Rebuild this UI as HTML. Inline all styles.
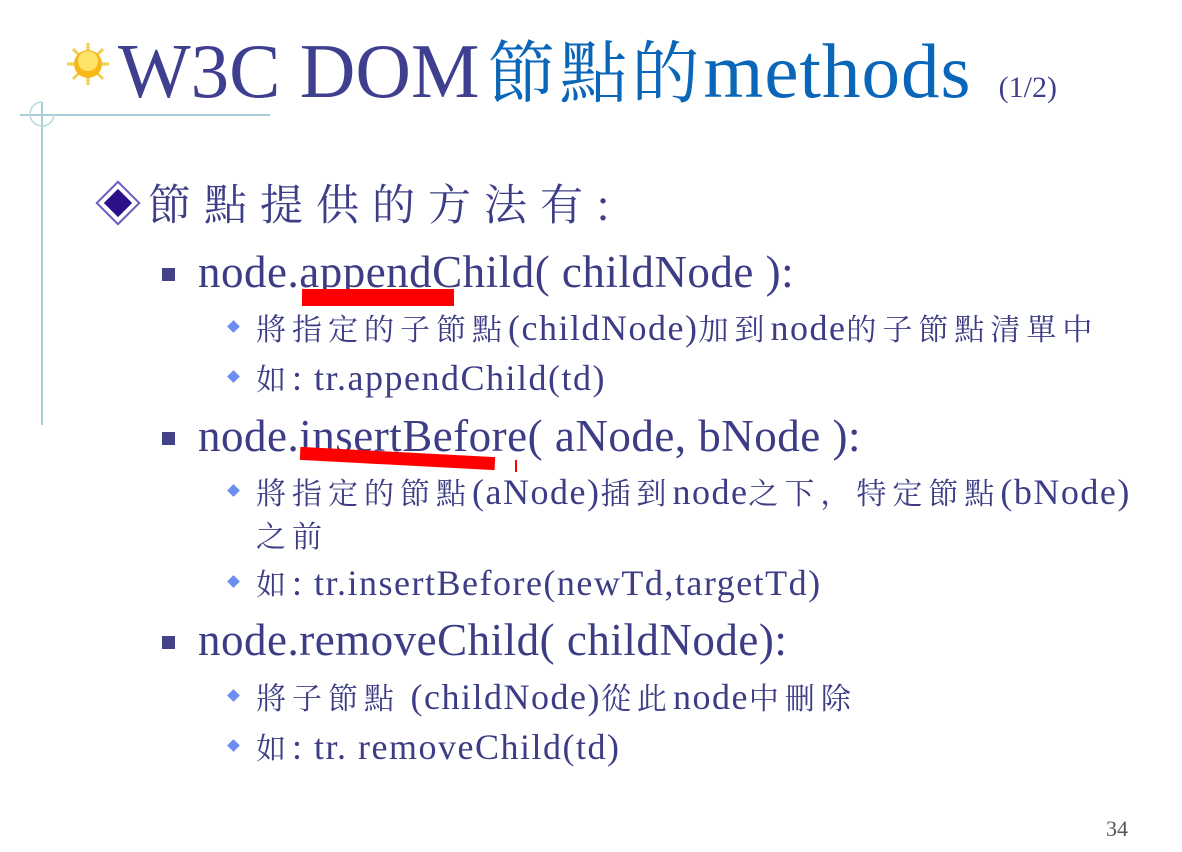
<!DOCTYPE html>
<html><head><meta charset="utf-8"><style>
body{margin:0;width:1182px;height:852px;background:#fff;overflow:hidden;position:relative;font-family:"Liberation Serif","Noto Serif CJK TC","Noto Serif CJK SC",serif;color:#3d3d86}
.a{position:absolute;white-space:nowrap;line-height:1}
.cj{font-family:"Noto Serif CJK SC","Noto Serif CJK TC",serif;}
.l2{font-size:45px;left:198px;letter-spacing:0.5px}
.l3{font-size:36px;left:256px;letter-spacing:1.5px}
.l3 .cj{font-size:30px;letter-spacing:6px}
.sq{position:absolute;width:13px;height:13px;background:#43438a;left:162px}
.dm{position:absolute;width:9px;height:9px;background:#6d8df0;transform:rotate(45deg);left:229px}
.red{position:absolute;background:#f00}
</style></head><body>
<svg style="position:absolute;left:0;top:0" width="300" height="440">
<line x1="20" y1="115" x2="270" y2="115" stroke="#a8cfd8" stroke-width="2"/>
<line x1="42" y1="102" x2="42" y2="425" stroke="#a8cfd8" stroke-width="2"/>
<path d="M42 102 A12 12 0 1 0 54 115" fill="none" stroke="#b8d8e0" stroke-width="1.5"/>
<g transform="translate(88,64)">
<g stroke="#f3d04a" stroke-width="3">
<line x1="0" y1="-21" x2="0" y2="21"/><line x1="-21" y1="0" x2="21" y2="0"/>
<line x1="-15" y1="-15" x2="15" y2="15"/><line x1="-15" y1="15" x2="15" y2="-15"/></g>
<circle r="14" fill="#f9b81a"/><circle r="10" cy="-3" fill="#fde36a"/></g>
<g transform="translate(118,203)"><rect x="-15" y="-15" width="30" height="30" transform="rotate(45)" fill="#fff" stroke="#6b5ec0" stroke-width="2"/><rect x="-10" y="-10" width="20" height="20" transform="rotate(45)" fill="#2d0f8a"/></g>
</svg>
<div class="a" style="left:118px;top:33px;font-size:77px;color:#3f3f90">W3C DOM<span class="cj" style="color:#0a66b8;font-size:68px;letter-spacing:4px;margin-left:8px">節點的</span><span style="color:#0a66b8;letter-spacing:1px">methods</span> <span style="font-size:30px;margin-left:8px">(1/2)</span></div>
<div class="a cj" style="left:148px;top:181px;font-size:43px;letter-spacing:13px;color:#3e3e88">節點提供的方法有:</div>

<div class="sq" style="top:268px"></div>
<div class="a l2" style="top:250px">node.appendChild( childNode ):</div>
<div class="red" style="left:302px;top:289px;width:152px;height:17px"></div>
<div class="dm" style="top:322px"></div>
<div class="a l3" style="top:310px"><span class="cj">將指定的子節點</span>(childNode)<span class="cj">加到</span>node<span class="cj">的子節點清單中</span></div>
<div class="dm" style="top:372px"></div>
<div class="a l3" style="top:360px"><span class="cj">如</span>: tr.appendChild(td)</div>

<div class="sq" style="top:432px"></div>
<div class="a l2" style="top:414px">node.insertBefore( aNode, bNode ):</div>
<div class="red" style="left:300px;top:452px;width:195px;height:13px;transform:rotate(3deg)"></div>
<div class="red" style="left:515px;top:460px;width:2px;height:12px"></div>
<div class="dm" style="top:486px"></div>
<div class="a l3" style="top:474px"><span class="cj">將指定的節點</span>(aNode)<span class="cj">插到</span>node<span class="cj">之下，特定節點</span>(bNode)</div>
<div class="a l3" style="top:517px"><span class="cj">之前</span></div>
<div class="dm" style="top:577px"></div>
<div class="a l3" style="top:565px"><span class="cj">如</span>: tr.insertBefore(newTd,targetTd)</div>

<div class="sq" style="top:636px"></div>
<div class="a l2" style="top:618px">node.removeChild( childNode):</div>
<div class="dm" style="top:691px"></div>
<div class="a l3" style="top:679px"><span class="cj">將子節點</span> (childNode)<span class="cj">從此</span>node<span class="cj">中刪除</span></div>
<div class="dm" style="top:741px"></div>
<div class="a l3" style="top:729px"><span class="cj">如</span>: tr. removeChild(td)</div>

<div class="a" style="left:1106px;top:818px;font-size:22px;color:#555">34</div>
</body></html>
